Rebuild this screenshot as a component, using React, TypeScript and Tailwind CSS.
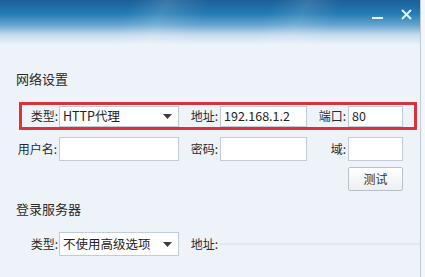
import React from 'react';

const font = { fontFamily: '"Microsoft YaHei", "Noto Sans CJK SC", "Liberation Sans", sans-serif' };

function Field({ w, h, value }: { w: string; h: string; value?: string }) {
  return (
    <div className={`${w} ${h} bg-white border border-[#c3cbd5] flex items-center px-[3px] text-[12.5px] text-[#222] leading-none`}>
      {value}
    </div>
  );
}

function Select({ value, h }: { value: string; h: string }) {
  return (
    <div className={`w-[120px] ${h} bg-white border border-[#c3cbd5] flex items-center justify-between pl-[3px] pr-[6px] text-[12.5px] text-[#222] leading-none`}>
      <span>{value}</span>
      <svg width="9" height="5" viewBox="0 0 9 5">
        <path d="M0 0 L9 0 L4.5 5 Z" fill="#3c3c3c" />
      </svg>
    </div>
  );
}

export default function App() {
  return (
    <div className="w-[425px] h-[277px] bg-[#f4f6f9] flex overflow-hidden" style={font}>
      <div className="w-[421px] h-full bg-[#eef3f9] border-r border-[#c2c9d2] flex flex-col text-[#2a2a2a]">
        {/* 标题栏 */}
        <div className="h-[45px] shrink-0 flex justify-end items-start pr-[8px] pt-[9px] gap-[18px] bg-[linear-gradient(115deg,rgba(255,255,255,0)_30%,rgba(255,255,255,0.14)_38%,rgba(255,255,255,0)_48%,rgba(255,255,255,0)_62%,rgba(255,255,255,0.12)_70%,rgba(255,255,255,0)_78%),linear-gradient(180deg,#1b5f98_0%,#237bb4_30%,#64a4cf_55%,#c6dcee_78%,#eef3f9_100%)]">
          <svg width="11" height="12" viewBox="0 0 11 12">
            <rect x="0" y="8" width="11" height="2" fill="#e8f2fa" />
          </svg>
          <svg width="11" height="11" viewBox="0 0 11 11">
            <path d="M1 1 L10 10 M10 1 L1 10" stroke="#e8f2fa" strokeWidth="2" />
          </svg>
        </div>

        <div className="pl-[16px] mt-[25px] text-[13px] leading-[18px]">网络设置</div>

        {/* 代理行 */}
        <div className="ml-[19px] mt-[14px] w-[398px] h-[28px] border-[3px] border-[#d7343d] flex items-center text-[12px]">
          <div className="w-[37px] text-right pr-[1px]">类型:</div>
          <Select value="HTTP代理" h="h-[21px]" />
          <div className="w-[41px] text-right pr-[2px]">地址:</div>
          <Field w="w-[87px]" h="h-[21px]" value="192.168.1.2" />
          <div className="w-[41px] text-right pr-[2px]">端口:</div>
          <Field w="w-[55px]" h="h-[21px]" value="80" />
        </div>

        <div className="mt-[7px] h-[24px] flex items-center text-[12px]">
          <div className="w-[59px] text-right pr-[2px]">用户名:</div>
          <Field w="w-[120px]" h="h-[24px]" />
          <div className="w-[41px] text-right pr-[2px]">密码:</div>
          <Field w="w-[87px]" h="h-[24px]" />
          <div className="w-[41px] text-right pr-[2px]">域:</div>
          <Field w="w-[55px]" h="h-[24px]" />
        </div>

        <button className="ml-[348px] mt-[6px] w-[55px] h-[24px] border border-[#b9c0c8] rounded-[2px] bg-[linear-gradient(180deg,#ffffff,#eceff2)] text-[12px] text-[#333]">
          测试
        </button>

        <div className="pl-[16px] mt-[9px] text-[13px] leading-[18px]">登录服务器</div>

        <div className="mt-[14px] h-[24px] flex items-center text-[12px]">
          <div className="w-[59px] text-right pr-[1px]">类型:</div>
          <Select value="不使用高级选项" h="h-[24px]" />
          <div className="w-[41px] text-right pr-[2px]">地址:</div>
          {/* 禁用的地址框 */}
          <div className="w-[200px] h-[2px] bg-[#e3e8ef]" />
        </div>
      </div>
    </div>
  );
}
